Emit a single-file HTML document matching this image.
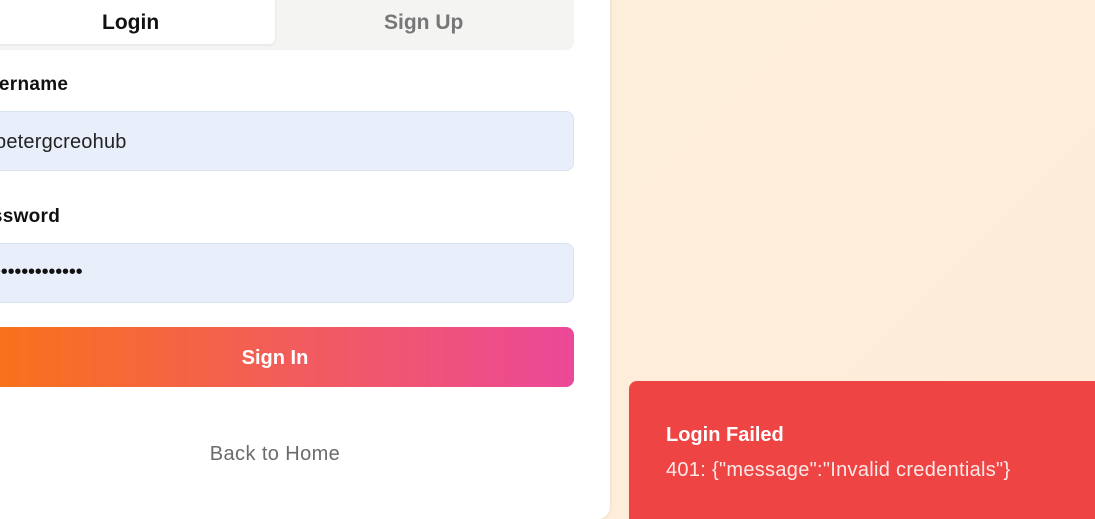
<!DOCTYPE html>
<html><head><meta charset="utf-8"><style>
*{box-sizing:border-box;margin:0;padding:0}
html,body{width:1095px;height:519px;overflow:hidden}
body{background:linear-gradient(135deg,#fdefdc,#fdecd8);font-family:"Liberation Sans",sans-serif;position:relative}
.card{position:absolute;left:-40px;top:-40px;width:650px;height:559px;background:#fff;border-radius:12px;box-shadow:0 0 3px rgba(0,0,0,.12)}
.abs{position:absolute}
.tabs{left:-24px;top:-10px;width:598px;height:60px;background:#f4f4f3;border-radius:8px}
.tab1{left:-20px;top:-10px;width:295px;height:54px;background:#fff;border-radius:6px;box-shadow:0 1px 3px rgba(0,0,0,.08)}
.t{font-size:21px;font-weight:600}
.lbl{font-size:19px;font-weight:600;color:#111;letter-spacing:.3px}
.inp{left:-24px;width:598px;height:60px;background:#e8effb;border:1px solid #dbe3ef;border-radius:8px}
.btn{left:-24px;top:327px;width:598px;height:60px;border-radius:8px;background:linear-gradient(90deg,#f97316,#ec4899);color:#fff;font-size:20px;font-weight:600;text-align:center;line-height:62px}
.toast{left:629px;top:381px;width:500px;height:160px;background:#ef4444;border-radius:8px;color:#fff}
</style></head><body>
<div class="card"></div>
<div class="abs tabs"></div>
<div class="abs tab1"></div>
<div class="abs t" style="left:102px;top:11px;color:#111">Login</div>
<div class="abs t" style="left:384px;top:11px;color:#777">Sign Up</div>
<div class="abs lbl" style="left:-26px;top:74px">Username</div>
<div class="abs inp" style="top:111px"></div>
<div class="abs" style="left:-5px;top:131px;font-size:20px;color:#222;letter-spacing:.2px">petergcreohub</div>
<div class="abs lbl" style="left:-32px;top:206px">Password</div>
<div class="abs inp" style="top:243px"></div>
<div class="abs" style="left:-6px;top:261px;font-size:20px;color:#111;letter-spacing:-.2px">•••••••••••••</div>
<div class="abs btn">Sign In</div>
<div class="abs" style="left:0;width:550px;text-align:center;top:443px;font-size:20px;color:#6b6b6b;letter-spacing:.4px">Back to Home</div>
<div class="abs toast">
<div class="abs" style="left:37px;top:43px;font-size:20px;font-weight:600">Login Failed</div>
<div class="abs" style="left:37px;top:78px;font-size:20px;color:#fde8e8;letter-spacing:.3px">401: {"message":"Invalid credentials"}</div>
</div>
</body></html>
